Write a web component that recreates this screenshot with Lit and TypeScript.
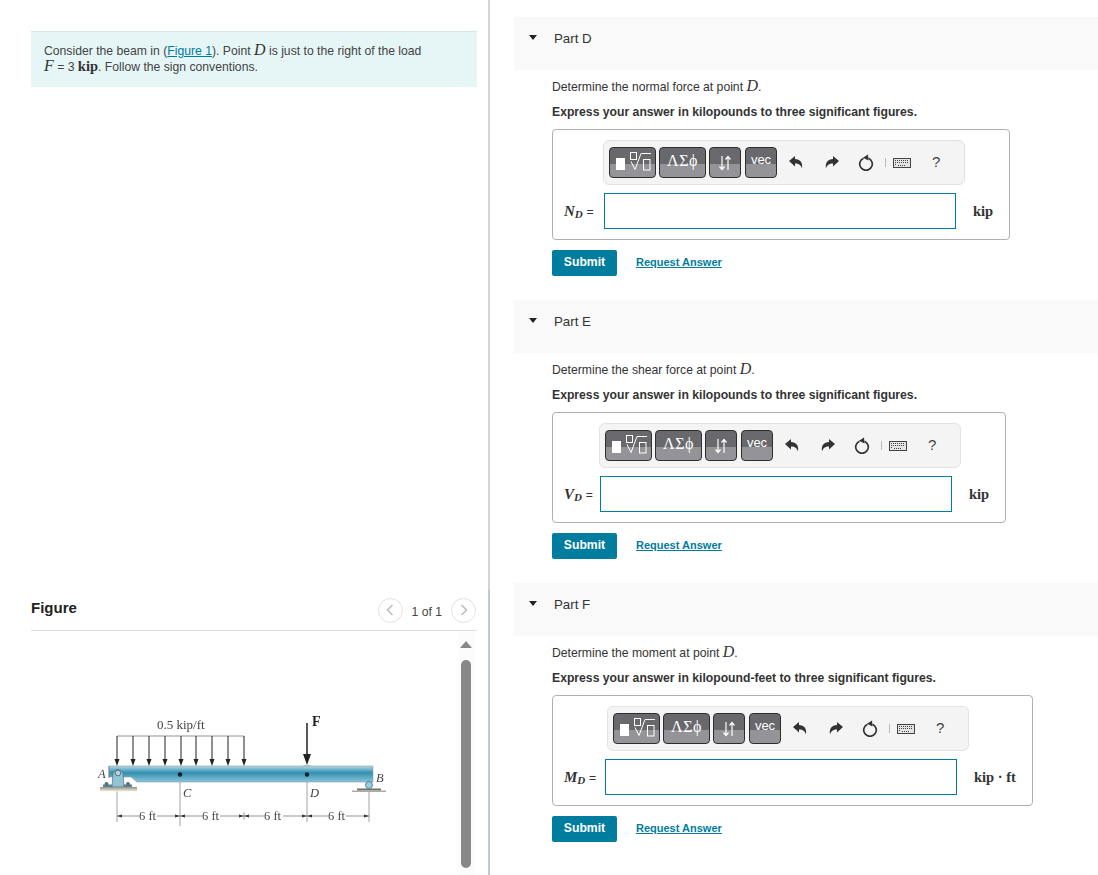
import { LitElement, html, css, svg } from "lit";
import { customElement } from "lit/decorators.js";

interface Part {
  name: string; q: string; unitWord: string; sym: string; sub: string; unit: string; toolLeft: number; labelW: number;
}

const parts: Part[] = [
  { name: "Part D", q: "normal force", unitWord: "kilopounds", sym: "N", sub: "D", unit: "kip", toolLeft: 39, labelW: 40 },
  { name: "Part E", q: "shear force", unitWord: "kilopounds", sym: "V", sub: "D", unit: "kip", toolLeft: 35, labelW: 36 },
  { name: "Part F", q: "moment", unitWord: "kilopound-feet", sym: "M", sub: "D", unit: "kip · ft", toolLeft: 43, labelW: 41 },
];

const loadXs = [117, 133, 149, 165, 181, 196, 212, 228, 244];

const beam = svg`
  <defs>
    <linearGradient id="bg" x1="0" y1="0" x2="0" y2="1">
      <stop offset="0" stop-color="#c4d6dc"/><stop offset="0.12" stop-color="#8cc4d8"/>
      <stop offset="0.42" stop-color="#2f8fb0"/><stop offset="0.6" stop-color="#4f9fbc"/>
      <stop offset="1" stop-color="#86c5dc"/>
    </linearGradient>
    <linearGradient id="gnd" x1="0" y1="0" x2="0" y2="1">
      <stop offset="0" stop-color="#8f9286"/><stop offset="1" stop-color="#f3f1e6"/>
    </linearGradient>
  </defs>
  <g stroke="#8a8a8a" stroke-width="0.8" fill="none">
    <path d="M117 790V822M180 782V826M244 812V820M307 782V822M369 792V822"/>
  </g>
  <path d="M109 766H373V782H137L131 777H109Z" fill="url(#bg)" stroke="#8aa0a8" stroke-width="0.6"/>
  <path d="M109 766V778" stroke="#777" stroke-width="0.8"/>
  <path d="M302 766q5-2 10 0z" fill="#a9b6b0"/>
  <rect x="103" y="784.500" width="29" height="2.500" fill="#5f7f8a"/>
  <path d="M112 787L113 773Q118 766 123 773L124 787Z" fill="#8fc4d6" stroke="#4d6d78" stroke-width="0.7"/>
  <circle cx="118" cy="773" r="2.800" fill="#b7d4de" stroke="#4d6d78" stroke-width="0.9"/>
  <circle cx="106.500" cy="784" r="2" fill="#54707a"/><circle cx="128" cy="784" r="2" fill="#54707a"/>
  <rect x="100" y="787" width="37" height="4.500" fill="url(#gnd)"/>
  <circle cx="369" cy="785" r="3.500" fill="#8fd0e6" stroke="#56727c" stroke-width="0.8"/>
  <rect x="357" y="788.500" width="24" height="2" fill="#6d7169"/>
  <rect x="352" y="790.500" width="34" height="1.500" fill="#a9aca0"/>
  <path d="M117 736H244" stroke="#777" stroke-width="0.8"/>
  ${loadXs.map((x) => svg`<path d="M${x} 736V760" stroke="#333" stroke-width="1.100"/><path d="M${x - 2.500} 759H${x + 2.500}L${x} 766Z" fill="#222"/>`)}
  <path d="M307 723V757" stroke="#222" stroke-width="1.500"/><path d="M303 754H311L307 765Z" fill="#222"/>
  <circle cx="180" cy="774.500" r="2.200" fill="#10222c"/><circle cx="307" cy="774.500" r="2.200" fill="#10222c"/>
  <path d="M117 816H139M157 816H180M180 816H202M220 816H244M244 816H264M283 816H307M307 816H328M346 816H369" stroke="#666" stroke-width="0.7"/>
  ${[117, 180, 244, 307].map((x) => svg`<path d="M${x} 816l5-1.500v3z" fill="#333"/>`)}
  ${[180, 244, 307, 369].map((x) => svg`<path d="M${x} 816l-5-1.500v3z" fill="#333"/>`)}
  <g font-family="'Liberation Serif',serif" font-size="12.500" fill="#444">
    <text x="157" y="729" font-size="13">0.5 kip/ft</text>
    <text x="139" y="820">6 ft</text><text x="202" y="820">6 ft</text>
    <text x="264" y="820">6 ft</text><text x="328" y="820">6 ft</text>
    <g font-style="italic"><text x="98" y="778">A</text><text x="183" y="797">C</text><text x="310" y="797">D</text><text x="376" y="782">B</text></g>
    <text x="312" y="726" font-weight="700" font-size="14" fill="#222">F</text>
  </g>
`;

@customElement("math-toolbar")
class MathToolbar extends LitElement {
  static styles = css`
    :host { display: block; }
    .bar { width: 362px; height: 45px; box-sizing: border-box; display: flex; align-items: center;
      background: #f4f4f4; border: 1px solid #e2e2e2; border-radius: 6px; padding: 0 0 0 5px; }
    .btn { height: 31px; box-sizing: border-box; border: 1px solid #2e2e30; border-radius: 4px; margin-right: 4px;
      background: linear-gradient(#69696d 0 54%, #939398 54% 100%);
      display: flex; align-items: center; justify-content: center; color: #fff; }
    .w47 { width: 47px; margin-right: 3px; } .w32 { width: 32px; }
    .greek { font: 16px "Liberation Serif", serif; letter-spacing: 0.5px; padding-bottom: 4px; }
    .vec { font: 13px "Liberation Sans", sans-serif; padding-bottom: 7px; }
    .ic { display: flex; align-items: center; justify-content: center; color: #333; }
    .u { width: 20px; margin-left: 5px; } .r { width: 20px; margin-left: 16px; } .o { width: 20px; margin-left: 14px; }
    .sep { width: 1px; height: 9px; background: #bbb; margin-left: 9px; }
    .k { margin-left: 7px; }
    .q { font: 15px "Liberation Sans", sans-serif; color: #444; margin-left: 21px; padding-bottom: 3px; }
    svg { display: block; }
  `;
  render() {
    return html`<div class="bar">
      <div class="btn w47"><svg width="37" height="25" viewBox="0 0 37 25" fill="none" stroke="#fff" stroke-width="1">
        <rect x="2" y="8" width="9" height="12" fill="#fff" stroke="none"/>
        <rect x="16.500" y="2.500" width="6" height="7"/>
        <path d="M17 11.500L21 19.500L27 3.500H37"/><rect x="29.500" y="9.500" width="6.500" height="10.500"/></svg></div>
      <div class="btn w47 greek">ΛΣϕ</div>
      <div class="btn w32"><svg width="14" height="16" viewBox="0 0 14 16" fill="none" stroke="#fff" stroke-width="1.200">
        <path d="M4 1V14M1.500 11.500L4 14.500L6.500 11.500M10 15V2M7.500 4.500L10 1.500L12.500 4.500"/></svg></div>
      <div class="btn w32 vec">vec</div>
      <div class="ic u"><svg width="14" height="13" viewBox="0 0 14 13"><path fill="#333" d="M0 5L6 0V3C11 3 14 6.500 13 12.500C12 9 10 7.500 6 7.500V10.500Z"/></svg></div>
      <div class="ic r"><svg width="14" height="13" viewBox="0 0 14 13"><path fill="#333" d="M14 5L8 0V3C3 3 0 6.500 1 12.500C2 9 4 7.500 8 7.500V10.500Z"/></svg></div>
      <div class="ic o"><svg width="16" height="17" viewBox="0 0 16 17" fill="none"><path d="M5.500 4.200A6.300 6.300 0 1 0 10.500 4.200" stroke="#333" stroke-width="1.700"/><path fill="#333" d="M10 0.500L5 3.800L10.500 6.500Z"/></svg></div>
      <div class="sep"></div>
      <div class="ic k"><svg width="18" height="10" viewBox="0 0 18 10" fill="none"><rect x="0.500" y="0.500" width="17" height="9" fill="#e4e4e4" stroke="#444"/><path d="M2 2.500H16M2 4.500H16M2 6.500H3M5 7.500H13" stroke="#444" stroke-dasharray="1 1"/></svg></div>
      <div class="q">?</div>
    </div>`;
  }
}
void MathToolbar;

@customElement("answer-part")
class AnswerPart extends LitElement {
  static properties = { part: { attribute: false } };
  part!: Part;
  static styles = css`
    :host { display: block; height: 283px; font: 12.2px "Liberation Sans", Arial, sans-serif; color: #333; }
    .head { height: 53px; background: #f9f9f9; display: flex; align-items: flex-start; }
    .tri { width: 0; height: 0; border: 4.500px solid transparent; border-top: 5px solid #222; border-bottom: 0; margin: 18px 17px 0 15px; }
    .title { font-size: 13.300px; color: #333; margin-top: 14px; line-height: 16px; }
    .body { padding-left: 38px; }
    .p1 { margin-top: 9px; height: 17px; line-height: 17px; }
    .p2 { margin-top: 8px; height: 16px; line-height: 16px; font-weight: 700; }
    .d { font: italic 16px/0 "Liberation Serif", serif; }
    .box { display: inline-block; margin-top: 9px; border: 1px solid #b0b0b0; border-radius: 4px; padding: 10px 16px 10px 11px; height: 111px; box-sizing: border-box; }
    .tb { display: block; margin-bottom: 8px; }
    .row { display: flex; align-items: center; height: 36px; }
    .lab { font: italic 700 15px "Liberation Serif", serif; color: #333; white-space: nowrap; flex: none; }
    .lab sub { font-size: 11px; vertical-align: -2px; line-height: 0; }
    .lab b { font: 12.2px "Liberation Sans", sans-serif; }
    .inp { width: 352px; height: 36px; box-sizing: border-box; border: 1px solid #007c9e; background: #fff; }
    .unit { font: 700 14.500px "Liberation Serif", serif; margin-left: 17px; color: #333; white-space: nowrap; }
    .acts { display: flex; align-items: center; margin-top: 10px; }
    .sub { width: 65px; height: 26px; background: #007c9e; color: #fff; font-weight: 700; font-size: 12.2px; border-radius: 2px; display: flex; align-items: center; justify-content: center; padding-bottom: 2px; box-sizing: border-box; }
    .req { margin-left: 19px; color: #007c9e; font-size: 11px; font-weight: 700; text-decoration: underline; padding-bottom: 2px; }
  `;
  render() {
    const p = this.part;
    return html`
      <div class="head"><span class="tri"></span><span class="title">${p.name}</span></div>
      <div class="body">
        <div class="p1">Determine the ${p.q} at point <span class="d">D</span>.</div>
        <div class="p2">Express your answer in ${p.unitWord} to three significant figures.</div>
        <div class="box">
          <math-toolbar class="tb" style="margin-left:${p.toolLeft}px"></math-toolbar>
          <div class="row">
            <span class="lab" style="width:${p.labelW}px">${p.sym}<sub>${p.sub}</sub> <b>=</b></span>
            <div class="inp"></div>
            <span class="unit">${p.unit}</span>
          </div>
        </div>
        <div class="acts"><div class="sub">Submit</div><span class="req">Request Answer</span></div>
      </div>`;
  }
}
void AnswerPart;

@customElement("app-root")
export class AppRoot extends LitElement {
  static styles = css`
    :host { display: flex; width: 1098px; height: 875px; overflow: hidden; background: #fff; font: 12.2px "Liberation Sans", Arial, sans-serif; color: #444; }
    .left { width: 488px; height: 875px; flex: none; padding: 31px 11px 0 31px; box-sizing: border-box; display: flex; flex-direction: column; }
    .divider { width: 2px; flex: none; background: linear-gradient(#d4d4d4 0 590px, #b9cbdc 590px); }
    .right { flex: 1; padding: 17px 0 0 24px; min-width: 0; }
    .intro { height: 56px; box-sizing: border-box; background: #e6f5f5; border-top: 1px solid #dbe6e8; padding: 11px 13px 0; line-height: 16px; width: 446px; }
    .m { font: italic 16px/0 "Liberation Serif", serif; color: #333; }
    .k { font: 700 14.500px/0 "Liberation Serif", serif; color: #333; }
    a { color: #007c9e; text-decoration: underline; }
    .fig-h { margin-top: 511px; width: 446px; height: 32px; border-bottom: 1px solid #ddd; display: flex; align-items: flex-start; }
    .fig-t { font-weight: 700; font-size: 15px; color: #222; flex: 1; line-height: 20px; }
    .pager { display: flex; align-items: center; height: 24px; margin-right: 1px; }
    .c { width: 23px; height: 23px; border: 1px solid #e2e2e2; border-radius: 50%; display: flex; align-items: center; justify-content: center; }
    .of { margin: 4px 9px 0; font-size: 12.2px; color: #444; }
    .fig-b { display: flex; flex: 1; width: 450px; min-height: 0; }
    .canvas { flex: 1; margin-left: -31px; min-width: 0; padding-top: 74px; }
    .canvas svg { display: block; filter: blur(0.25px); }
    .scroll { width: 18px; margin-right: 6px; background: #fcfcfc; display: flex; flex-direction: column; align-items: center; padding-top: 10px; box-sizing: border-box; }
    .up { width: 0; height: 0; border: 6px solid transparent; border-bottom: 7px solid #888; border-top: 0; }
    .thumb { width: 10px; height: 208px; margin-top: 12px; background: #888; border-radius: 5px; }
  `;
  render() {
    return html`
      <div class="left">
        <div class="intro">Consider the beam in (<a>Figure 1</a>). Point <span class="m">D</span> is just to the right of the load<br>
          <span class="m">F</span> = 3 <span class="k">kip</span>. Follow the sign conventions.</div>
        <div class="fig-h">
          <div class="fig-t">Figure</div>
          <div class="pager">
            <div class="c"><svg width="8" height="12" viewBox="0 0 8 12" fill="none"><path d="M6.500 1L1.500 6L6.500 11" stroke="#bbb" stroke-width="1.500"/></svg></div>
            <span class="of">1 of 1</span>
            <div class="c"><svg width="8" height="12" viewBox="0 0 8 12" fill="none"><path d="M1.500 1L6.500 6L1.500 11" stroke="#bbb" stroke-width="1.500"/></svg></div>
          </div>
        </div>
        <div class="fig-b">
          <div class="canvas"><svg width="400" height="130" viewBox="0 705 400 130">${beam}</svg></div>
          <div class="scroll"><div class="up"></div><div class="thumb"></div></div>
        </div>
      </div>
      <div class="divider"></div>
      <div class="right">${parts.map((p) => html`<answer-part .part=${p}></answer-part>`)}</div>`;
  }
}
